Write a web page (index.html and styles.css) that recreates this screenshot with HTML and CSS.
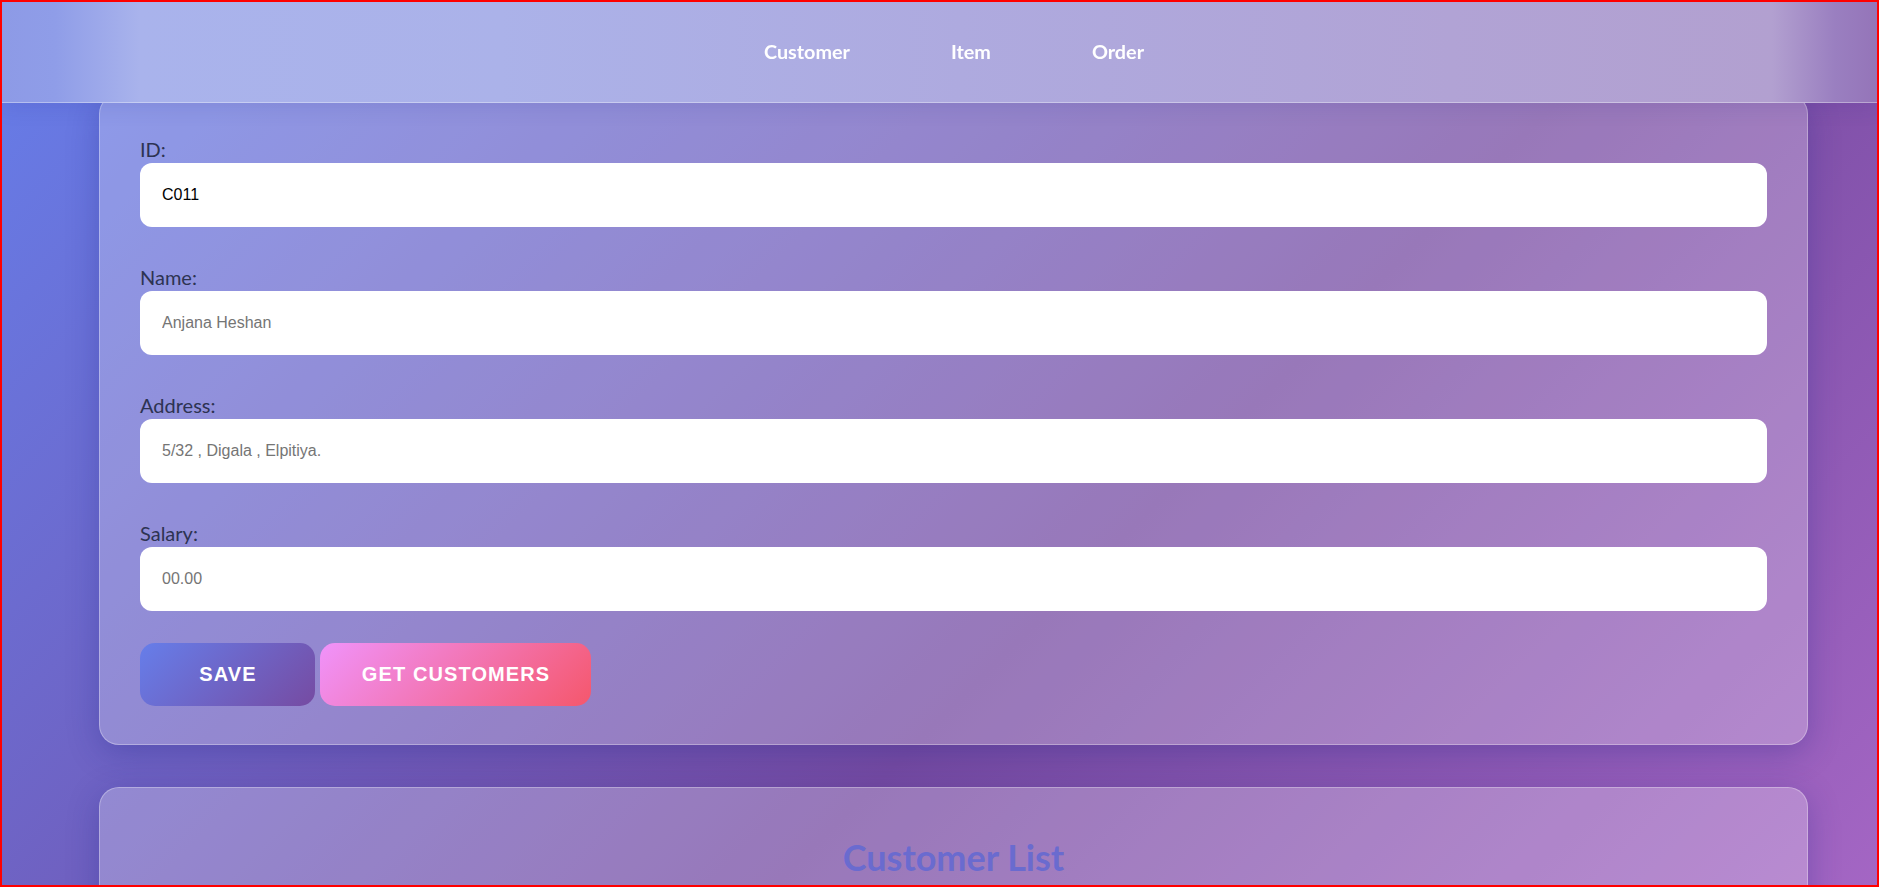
FILE: index.html
```html
<!DOCTYPE html>
<html lang="en">
<head>
<meta charset="UTF-8">
<title>Customer</title>
<link rel="stylesheet" href="styles.css">
</head>
<body>
<nav class="navbar">
  <ul class="nav-links">
    <li><a href="#">Customer</a></li>
    <li><a href="#">Item</a></li>
    <li><a href="#">Order</a></li>
  </ul>
</nav>
<main class="container">
  <section class="card form-card">
    <form class="fields">
      <div class="form-group">
        <label for="id">ID:</label>
        <input id="id" type="text" value="C011">
      </div>
      <div class="form-group">
        <label for="name">Name:</label>
        <input id="name" type="text" placeholder="Anjana Heshan">
      </div>
      <div class="form-group">
        <label for="address">Address:</label>
        <input id="address" type="text" placeholder="5/32 , Digala , Elpitiya.">
      </div>
      <div class="form-group">
        <label for="salary">Salary:</label>
        <input id="salary" type="text" placeholder="00.00">
      </div>
    </form>
    <div class="actions">
      <button class="btn btn-save" type="button">Save</button>
      <button class="btn btn-get" type="button">Get Customers</button>
    </div>
  </section>
  <section class="card list-card">
    <h2 class="list-title">Customer List</h2>
  </section>
</main>
<div class="frame"></div>
</body>
</html>
```
FILE: styles.css
```css
* { box-sizing: border-box; }

html, body {
  margin: 0;
  padding: 0;
}

body {
  min-height: 100vh;
  font-family: "Lato", "Open Sans", sans-serif;
  background: linear-gradient(135deg, #667eea 0%, #764ba2 60%, #a466c4 100%) fixed;
  overflow: hidden;
}

.navbar {
  position: fixed;
  top: 0;
  left: 0;
  right: 0;
  height: 103px;
  display: flex;
  align-items: center;
  justify-content: center;
  background: linear-gradient(90deg,
    #8d9ae6 0px,
    #8f9de8 55px,
    #a9b3ec 140px,
    #abb2e9 500px,
    #aeaadf 960px,
    #b1a3d5 1450px,
    #b2a0d0 1772px,
    #9a7fc0 1835px,
    #9474b8 1879px);
  border-bottom: 1px solid rgba(255, 255, 255, 0.35);
  box-shadow: 0 4px 20px rgba(31, 38, 135, 0.12);
  z-index: 10;
}

.nav-links {
  list-style: none;
  margin: 0;
  padding: 0 0 0 29px;
  display: flex;
  gap: 101px;
}

.nav-links a {
  color: #ffffff;
  text-decoration: none;
  font-weight: 700;
  font-size: 19.8px;
}

.container {
  padding: 94px 71px 0 99px;
}

.card {
  background: rgba(255, 255, 255, 0.25);
  border: 1px solid rgba(255, 255, 255, 0.3);
  border-radius: 20px;
  box-shadow: 0 8px 32px rgba(31, 38, 135, 0.3);
}

.form-card {
  padding: 43px 40px 38px;
}

.fields {
  display: flex;
  flex-direction: column;
  gap: 39px;
  margin: 0;
}

.form-group label {
  display: block;
  font-size: 20px;
  line-height: 22px;
  margin-bottom: 3px;
  color: #2d3352;
}

.form-group input {
  display: block;
  width: 100%;
  height: 64px;
  padding: 0 22px;
  border: none;
  border-radius: 12px;
  background: #ffffff;
  font-family: "Liberation Sans", Arial, sans-serif;
  font-size: 16px;
  color: #000000;
  outline: none;
}

.form-group input::placeholder {
  color: #757575;
}

.actions {
  display: flex;
  gap: 5px;
  margin-top: 32px;
}

.btn {
  height: 63px;
  border: none;
  border-radius: 15px;
  color: #ffffff;
  font-family: "Liberation Sans", Arial, sans-serif;
  font-weight: 700;
  font-size: 20px;
  letter-spacing: 1.1px;
  text-transform: uppercase;
  padding: 0 0 0 1.1px;
  cursor: pointer;
}

.btn-save {
  width: 175px;
  background: linear-gradient(135deg, #667eea 0%, #764ba2 100%);
}

.btn-get {
  width: 271px;
  background: linear-gradient(135deg, #f093fb 0%, #f5576c 100%);
}

.list-card {
  margin-top: 42px;
  height: 300px;
  padding: 40px;
}

.list-title {
  margin: 8px 0 0;
  text-align: center;
  font-size: 36px;
  line-height: 1.2;
  font-weight: 700;
  color: #6a6bcf;
}

.frame {
  position: fixed;
  inset: 0;
  border: 2px solid #ff0000;
  pointer-events: none;
  z-index: 100;
}
```
